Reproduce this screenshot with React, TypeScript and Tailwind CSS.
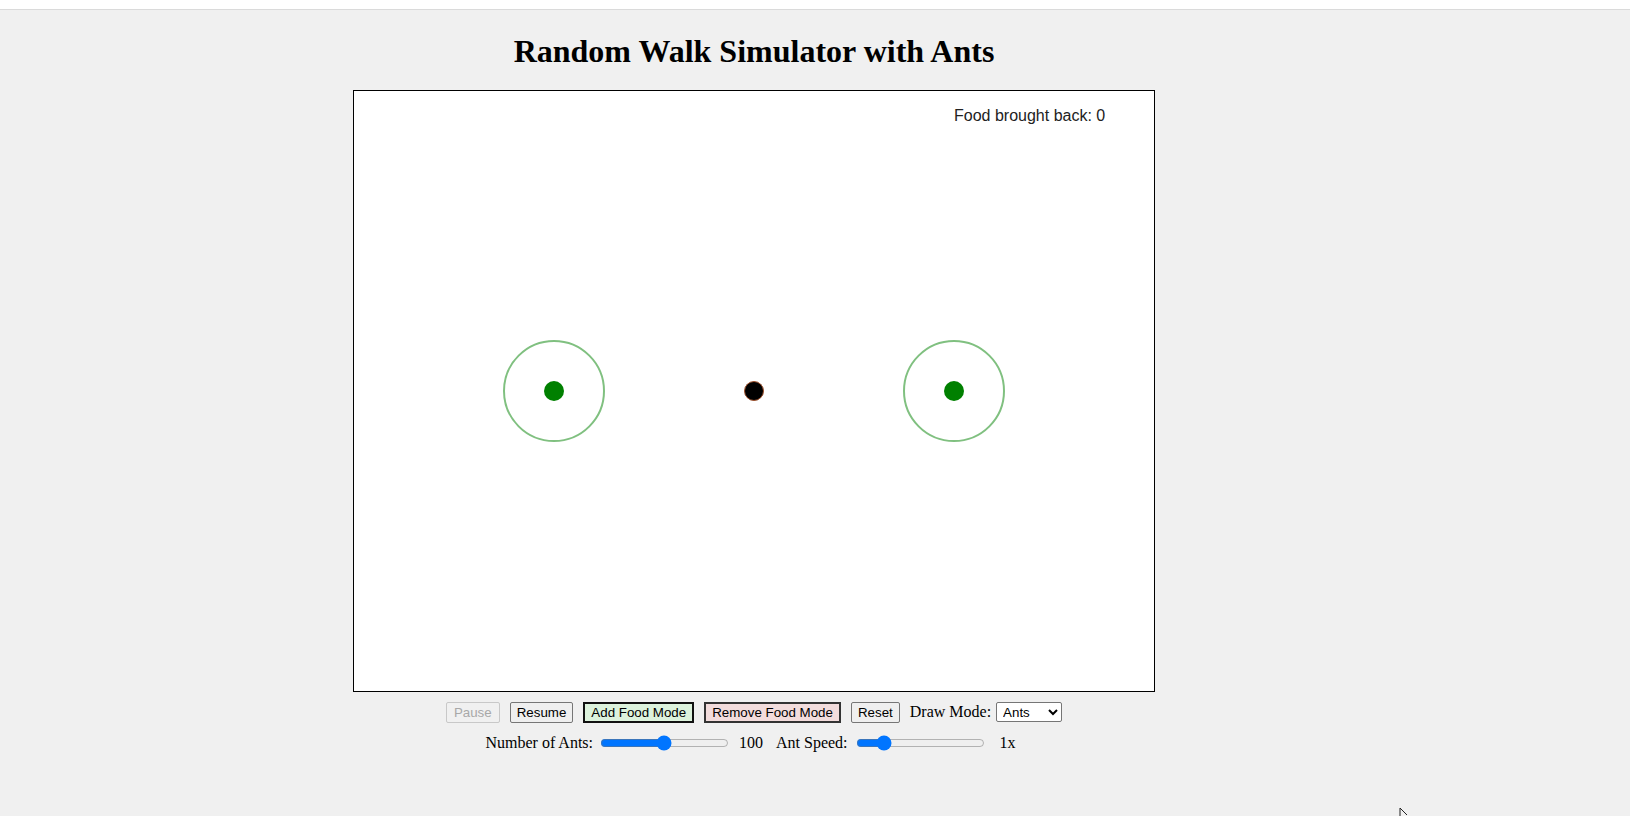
import { useState } from "react";

const serif = "font-['Liberation_Serif','Times_New_Roman',serif]";
const sans = "font-['Liberation_Sans',Arial,sans-serif]";

const Nest = ({ cx, cy }: { cx: number; cy: number }) => (
  <g>
    <circle cx={cx} cy={cy} r={50} fill="none" stroke="#80c080" strokeWidth={2} />
    <circle cx={cx} cy={cy} r={10} fill="#008000" />
  </g>
);

export default function App() {
  const [ants, setAnts] = useState(100);
  const [speed, setSpeed] = useState(1);
  const [mode, setMode] = useState("ants");

  return (
    <div className={`relative min-h-[816px] bg-[#f0f0f0] ${serif} text-black`}>
      {/* top strip */}
      <div className="h-[10px] bg-white border-b border-[#dadada]" />

      <div className="w-[1508px] flex flex-col items-center">
        <h1 className="mt-[23px] mb-[20px] text-[32px] leading-[37px] font-bold">
          Random Walk Simulator with Ants
        </h1>

        {/* canvas */}
        <div className="relative w-[802px] h-[602px] border border-black bg-white">
          <svg width="800" height="600" viewBox="0 0 800 600" className="block">
            <Nest cx={200} cy={300} />
            <Nest cx={600} cy={300} />
            <circle cx={400} cy={300} r={9.5} fill="#000" stroke="#a0522d" strokeWidth={1} />
          </svg>
          <span
            className={`absolute left-[600px] top-[16px] text-[16px] leading-[18px] text-[#222] ${sans}`}
          >
            Food brought back: 0
          </span>
        </div>

        {/* controls */}
        <div className="mt-[8px] flex items-center gap-[10px]">
          <button
            disabled
            className={`${sans} text-[13.33px] leading-[15px] px-[7px] py-[2px] border border-[#c8c8c8] rounded-[2px] text-[#a8a8a8] bg-[#f0f0f0]`}
          >
            Pause
          </button>
          <button
            className={`${sans} text-[13.33px] leading-[15px] px-[6px] py-[2px] border border-[#767676] rounded-[2px] bg-[#efefef]`}
          >
            Resume
          </button>
          <button
            className={`${sans} text-[13.33px] leading-[15px] px-[6px] py-[1px] border-2 border-[#111] bg-[#dcf2dc]`}
          >
            Add Food Mode
          </button>
          <button
            className={`${sans} text-[13.33px] leading-[15px] px-[6px] py-[1px] border-2 border-[#333] bg-[#f2dcdc]`}
          >
            Remove Food Mode
          </button>
          <button
            className={`${sans} text-[13.33px] leading-[15px] px-[6px] py-[2px] border border-[#767676] rounded-[2px] bg-[#efefef]`}
          >
            Reset
          </button>
          <div className="flex items-center gap-[5px]">
            <span className="text-[16px]">Draw Mode:</span>
            <select
              value={mode}
              onChange={(e) => setMode(e.target.value)}
              className={`${sans} w-[66px] h-[20px] text-[13.33px] border border-[#767676] rounded-[2px] bg-white pl-[2px]`}
            >
              <option value="ants">Ants</option>
              <option value="pheromones">Pheromones</option>
              <option value="none">None</option>
            </select>
          </div>
        </div>

        <div className="mt-[7px] pr-[7px] flex items-center text-[16px]">
          <span>Number of Ants:</span>
          <input
            type="range"
            min={1}
            max={200}
            value={ants}
            onChange={(e) => setAnts(Number(e.target.value))}
            className="ml-[7px] w-[129px]"
          />
          <span className="ml-[10px]">{ants}</span>
          <span className="ml-[13px]">Ant Speed:</span>
          <input
            type="range"
            min={0.1}
            max={5}
            step={0.1}
            value={speed}
            onChange={(e) => setSpeed(Number(e.target.value))}
            className="ml-[8px] w-[129px]"
          />
          <span className="ml-[15px]">{speed}x</span>
        </div>
      </div>

      {/* mouse pointer left in the shot */}
      <svg
        className="absolute left-[1399px] top-[808px]"
        width="10"
        height="8"
        viewBox="0 0 10 8"
      >
        <path d="M1 0 L1 8 M1 0 L8 7" stroke="#222" strokeWidth="1" fill="none" />
      </svg>
    </div>
  );
}
